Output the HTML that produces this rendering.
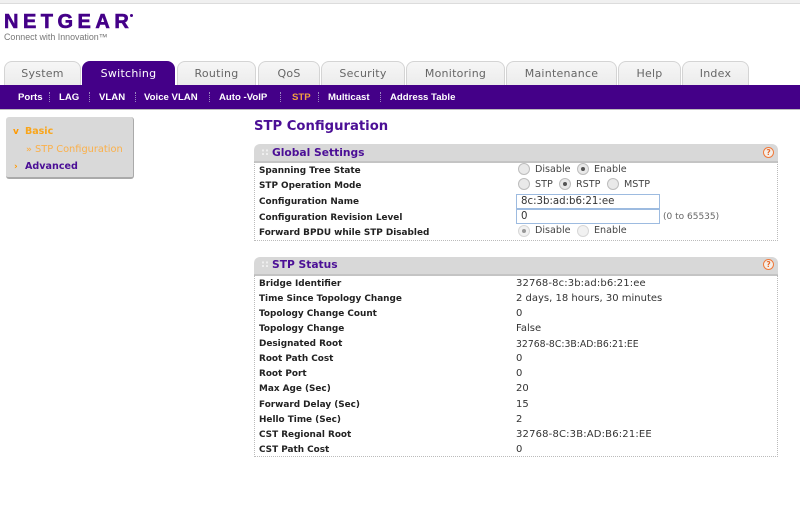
<!DOCTYPE html>
<html><head><meta charset="utf-8"><style>
html,body{margin:0;padding:0;width:800px;height:510px;overflow:hidden;background:#fff}
body{position:relative;font-family:"DejaVu Sans","Liberation Sans",sans-serif}
div,span.a{position:absolute;white-space:nowrap}
.tab{top:61px;height:24px;box-sizing:border-box;border:1px solid #d4d4d4;border-bottom:0;border-radius:8px 8px 0 0;background:linear-gradient(#f6f6f6,#ececec);color:#666;font-size:11px;line-height:23px;text-align:center;letter-spacing:.25px}
.tab.on{background:#440088;border-color:#440088;color:#fff}
.sub{top:91px;font-size:9.6px;line-height:14px;color:#fff;font-weight:bold;font-family:"Liberation Sans",sans-serif}
.sep{top:92px;height:10px;border-left:1px dotted #9a86c0}
.hd{left:254px;width:524px;height:17px;background:#d8d8d8;border-radius:6px 6px 0 0;border-bottom:2px solid #c4c4c4}
.ht{left:272px;font-size:10.7px;font-weight:bold;color:#4b0f96;line-height:16px}
.dots{left:261px;font-size:10px;color:#f2f2f2;font-weight:bold;line-height:16px}
.box{left:254px;width:522px;border:1px dotted #bbb;border-top:0}
.l{left:259px;font-size:8.9px;font-weight:bold;color:#222;line-height:12px}
.v{left:516px;font-size:10px;color:#333;line-height:12px}
.s{font-size:9.3px}
.f{font-size:9.6px;color:#444;line-height:12px}
.r{width:10px;height:10px;border-radius:50%;border:1px solid #bdbdbd;background:#e9e9e9}
.r.c::after{content:"";position:absolute;left:3px;top:3px;width:4px;height:4px;border-radius:50%;background:#555}
.in{left:516px;width:142px;height:13px;border:1px solid #9dbbe0;background:#fff;font-size:10.2px;color:#333;line-height:13px;text-indent:4px}
.help{left:763px;width:9px;height:9px;border:1px solid #f07a3c;border-radius:50%;color:#e8682a;background:#f4efe9;font-size:7.5px;font-weight:bold;line-height:9px;text-align:center}
</style></head><body>
<div style="left:0;top:0;width:800px;height:4px;background:#f0f0f0;border-bottom:1px solid #dcdcdc;box-sizing:border-box"></div>

<div style="left:4px;top:10px;font-family:'Liberation Sans',sans-serif;font-weight:bold;font-size:20px;line-height:24px;letter-spacing:4.5px;color:#440088;-webkit-text-stroke:.6px #440088">NETGEAR</div>
<div style="left:130px;top:14px;width:3px;height:3px;border-radius:50%;background:#440088"></div>
<div style="left:4px;top:31px;font-family:'Liberation Sans',sans-serif;font-size:8.9px;line-height:12px;color:#777">Connect with Innovation™</div>

<div class="tab" style="left:4px;width:77px">System</div>
<div class="tab on" style="left:82px;width:93px">Switching</div>
<div class="tab" style="left:177px;width:79px">Routing</div>
<div class="tab" style="left:258px;width:62px">QoS</div>
<div class="tab" style="left:321px;width:84px">Security</div>
<div class="tab" style="left:406px;width:99px">Monitoring</div>
<div class="tab" style="left:506px;width:111px">Maintenance</div>
<div class="tab" style="left:618px;width:63px">Help</div>
<div class="tab" style="left:682px;width:67px">Index</div>

<div style="left:0;top:85px;width:800px;height:24px;background:#440088"></div>
<div style="left:0;top:109px;width:800px;height:1px;background:#bbb"></div>
<div class="sub" style="left:18px">Ports</div><div class="sep" style="left:49px"></div>
<div class="sub" style="left:59px">LAG</div><div class="sep" style="left:89px"></div>
<div class="sub" style="left:99px">VLAN</div><div class="sep" style="left:135px"></div>
<div class="sub" style="left:144px">Voice VLAN</div><div class="sep" style="left:209px"></div>
<div class="sub" style="left:219px">Auto -VoIP</div><div class="sep" style="left:280px"></div>
<div class="sub" style="left:292px;color:#f0a040">STP</div><div class="sep" style="left:318px"></div>
<div class="sub" style="left:328px">Multicast</div><div class="sep" style="left:380px"></div>
<div class="sub" style="left:390px">Address Table</div>

<div style="left:6px;top:117px;width:127px;height:60px;background:#d9d9d9;border-radius:3px;border-right:1px solid #aaa;border-bottom:2px solid #aaa"></div>
<div style="left:13px;top:126px;font-size:9px;font-weight:bold;color:#f90;line-height:12px">v</div>
<div style="left:25px;top:126px;font-size:9.5px;font-weight:bold;color:#f9a51a;line-height:12px">Basic</div>
<div style="left:26px;top:144px;font-size:9px;font-weight:bold;color:#fbb04a;line-height:12px">»</div>
<div style="left:35px;top:144px;font-size:9.8px;color:#fbb04a;line-height:12px">STP Configuration</div>
<div style="left:14px;top:161px;font-size:9px;font-weight:bold;color:#f90;line-height:12px">›</div>
<div style="left:25px;top:161px;font-size:9.6px;font-weight:bold;color:#4b0f96;line-height:12px">Advanced</div>

<div style="left:254px;top:119px;font-size:13.2px;font-weight:bold;color:#4b0f96;line-height:16px">STP Configuration</div>

<div class="hd" style="top:144px"></div>
<div class="dots" style="top:145px">::</div>
<div class="ht" style="top:145px">Global Settings</div>
<div class="help" style="top:147px">?</div>
<div class="box" style="top:162px;height:78px"></div>
<div class="l" style="top:165px">Spanning Tree State</div>
<div class="l" style="top:180px">STP Operation Mode</div>
<div class="l" style="top:196px">Configuration Name</div>
<div class="l" style="top:212px">Configuration Revision Level</div>
<div class="l" style="top:227px">Forward BPDU while STP Disabled</div>

<div class="r" style="left:518px;top:163px"></div><div class="f" style="left:535px;top:164px">Disable</div>
<div class="r c" style="left:577px;top:163px"></div><div class="f" style="left:594px;top:164px">Enable</div>
<div class="r" style="left:518px;top:178px"></div><div class="f" style="left:535px;top:179px">STP</div>
<div class="r c" style="left:559px;top:178px"></div><div class="f" style="left:576px;top:179px">RSTP</div>
<div class="r" style="left:607px;top:178px"></div><div class="f" style="left:624px;top:179px">MSTP</div>
<div class="in" style="top:194px">8c:3b:ad:b6:21:ee</div>
<div class="in" style="top:209px">0</div>
<div class="f" style="left:663px;top:211px;color:#666;font-size:9px">(0 to 65535)</div>
<div class="r c" style="left:518px;top:225px;opacity:.6"></div><div class="f" style="left:535px;top:225px">Disable</div>
<div class="r" style="left:577px;top:225px;opacity:.6"></div><div class="f" style="left:594px;top:225px">Enable</div>

<div class="hd" style="top:257px"></div>
<div class="dots" style="top:257px">::</div>
<div class="ht" style="top:257px">STP Status</div>
<div class="help" style="top:259px">?</div>
<div class="box" style="top:275px;height:181px"></div>
<div class="l" style="top:278px">Bridge Identifier</div><div class="v" style="top:278px;letter-spacing:.12px">32768-8c:3b:ad:b6:21:ee</div>
<div class="l" style="top:293px">Time Since Topology Change</div><div class="v" style="top:293px">2 days, 18 hours, 30 minutes</div>
<div class="l" style="top:308px">Topology Change Count</div><div class="v" style="top:308px">0</div>
<div class="l" style="top:323px">Topology Change</div><div class="v" style="top:323px">False</div>
<div class="l" style="top:338px">Designated Root</div><div class="v s" style="top:339px">32768-8C:3B:AD:B6:21:EE</div>
<div class="l" style="top:353px">Root Path Cost</div><div class="v" style="top:353px">0</div>
<div class="l" style="top:368px">Root Port</div><div class="v" style="top:368px">0</div>
<div class="l" style="top:383px">Max Age (Sec)</div><div class="v" style="top:383px">20</div>
<div class="l" style="top:399px">Forward Delay (Sec)</div><div class="v" style="top:399px">15</div>
<div class="l" style="top:414px">Hello Time (Sec)</div><div class="v" style="top:414px">2</div>
<div class="l" style="top:429px">CST Regional Root</div><div class="v" style="top:429px;letter-spacing:.17px">32768-8C:3B:AD:B6:21:EE</div>
<div class="l" style="top:444px">CST Path Cost</div><div class="v" style="top:444px">0</div>
</body></html>
